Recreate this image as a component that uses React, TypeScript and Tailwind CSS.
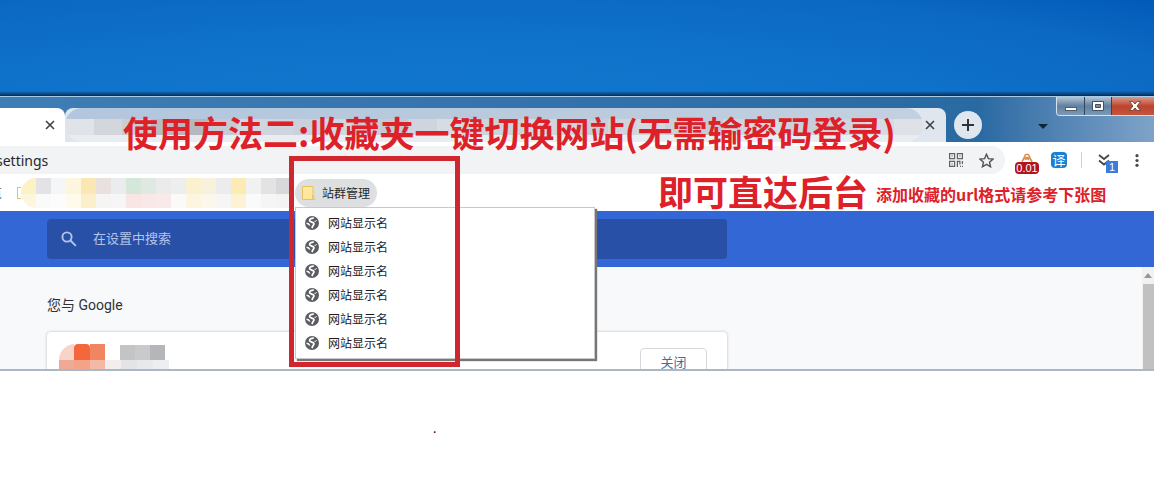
import React from 'react';

const TAB_BLUR = [
  'bg-[#e0e4e9]', 'bg-[#d3d6db]', 'bg-[#cccdd2]', 'bg-[#b9bbc2]', 'bg-[#b5b8c0]', 'bg-[#c6cad2]',
  'bg-[#d2d7de]', 'bg-[#cfd5de]', 'bg-[#cad1dc]', 'bg-[#d2d8e0]', 'bg-[#c8cfda]', 'bg-[#c3cbd7]',
  'bg-[#ced5de]', 'bg-[#d7dce3]', 'bg-[#cdd4dd]', 'bg-[#cbd3dd]', 'bg-[#d4dae2]', 'bg-[#d1d7df]',
  'bg-[#c7cfda]', 'bg-[#ced5de]', 'bg-[#d3d9e1]', 'bg-[#cad1db]', 'bg-[#c4cbd6]', 'bg-[#cfd5de]',
  'bg-[#d5dbe2]', 'bg-[#cbd2db]', 'bg-[#c8cfd8]', 'bg-[#ced5dd]', 'bg-[#d6dbe1]', 'bg-[#dee2e6]',
];

const BOOKMARK_BLUR = [
  ['bg-[#fdf1c6]', 'bg-[#fdf6de]'],
  ['bg-[#e3e3e6]', 'bg-[#fafafb]'],
  ['bg-[#f5f6f7]', 'bg-[#fcfcfc]'],
  ['bg-[#fdf6df]', 'bg-[#fefaec]'],
  ['bg-[#fbe7b3]', 'bg-[#fcf0cc]'],
  ['bg-[#e8e1df]', 'bg-[#f7f5f4]'],
  ['bg-[#ebeced]', 'bg-[#f6f6f6]'],
  ['bg-[#d3e8d9]', 'bg-[#fae5e5]'],
  ['bg-[#dfe9e2]', 'bg-[#fae7e7]'],
  ['bg-[#ebebec]', 'bg-[#fae9e9]'],
  ['bg-[#edeeef]', 'bg-[#fafafa]'],
  ['bg-[#fbf1cf]', 'bg-[#fcf6e0]'],
  ['bg-[#f8f1dc]', 'bg-[#fbf7ea]'],
  ['bg-[#ececed]', 'bg-[#f6f6f6]'],
  ['bg-[#fcebb5]', 'bg-[#fdf3d2]'],
  ['bg-[#f1f1f2]', 'bg-[#fafafa]'],
  ['bg-[#e3e3e4]', 'bg-[#f5f5f5]'],
  ['bg-[#d8d8da]', 'bg-[#f3f3f3]'],
];

const SITES = [1, 2, 3, 4, 5, 6];

const CloseIcon = () => (
  <svg className="size-[10px]" viewBox="0 0 10 10" stroke="#3c4043" strokeWidth="1.6" fill="none">
    <path d="M1 1l8 8M9 1l-8 8" />
  </svg>
);

const FolderIcon = () => (
  <svg className="size-[14px] shrink-0" viewBox="0 0 14 14">
    <path d="M.5 .5h10.500v9l1.500 4h-12z" fill="#ffe79c" stroke="#e6c261" />
    <path d="M11 9l-1 4.500" stroke="#e6c261" fill="none" />
  </svg>
);

const GlobeIcon = () => (
  <svg className="size-[14px] shrink-0" viewBox="0 0 14 14" fill="none" stroke="#fff">
    <circle cx="7" cy="7" r="7" fill="#5a5d61" stroke="none" />
    <path d="M8.800 2.200C6.500 2 4.200 3.200 4.600 4.800 5 6.300 8.200 5.800 8.900 7.300 9.500 8.700 8.500 9 8 9.600 7.500 10.300 7.500 11 6.800 12" strokeWidth="1.700" />
    <path d="M1.500 7.200c1.700.2 2.700 1 3.300 2.300" strokeWidth="1.500" />
    <path d="M9.500 5.500c1 0 1.800-.5 2.200-1.200" strokeWidth="1" />
  </svg>
);

const WindowControls = () => (
  <div className="flex h-[19px] shrink-0 overflow-hidden rounded-bl border border-t-0 border-r-0 border-[#d5e1ec] text-white">
    <button aria-label="最小化" className="flex w-[28px] items-end justify-center border-r border-[#30475f] bg-linear-to-b from-[#b5c6d6] via-[#60809f] to-[#7c9ab5] pb-1">
      <span className="h-[4px] w-[12px] border border-[#4d5b6b] bg-white" />
    </button>
    <button aria-label="最大化" className="flex w-[27px] items-center justify-center border-r border-[#30475f] bg-linear-to-b from-[#b5c6d6] via-[#60809f] to-[#7c9ab5]">
      <svg className="h-[10px] w-[12px]" viewBox="0 0 12 10" fill="none">
        <path d="M.5.5h11v9H.5z" fill="#fff" stroke="#414f60" />
        <path d="M3.500 3.500h5v3h-5z" fill="#7890a8" stroke="#414f60" />
      </svg>
    </button>
    <button aria-label="关闭窗口" className="flex w-[42px] items-center justify-center bg-linear-to-b from-[#d69a8b] via-[#bd4330] to-[#c5553c] pl-1">
      <svg className="h-[10px] w-[12px]" viewBox="0 0 12 10">
        <path d="M.5.5h3.300L6 3 8.200.5h3.300L8 5l3.500 4.500H8.200L6 7 3.800 9.500H.5L4 5z" fill="#fff" stroke="#64372f" strokeWidth=".8" />
      </svg>
    </button>
  </div>
);

const TabStrip = () => (
  <div className="flex h-[46px] items-start border-t border-[#a9cbe6] bg-linear-to-r from-[#3f7db5] via-[#2a6aa3] via-85% to-[#7fa3c8]">
    <div className="flex min-w-0 flex-1 items-end self-end">
      <div className="flex h-[34px] w-[65px] shrink-0 items-center justify-end rounded-tr-lg bg-white pr-[10px]">
        <button aria-label="关闭标签页"><CloseIcon /></button>
      </div>
      <div className="flex h-[34px] max-w-[881px] min-w-0 flex-1 items-center rounded-t-lg bg-[#dfe6ee]">
        <div className="flex h-[34px] min-w-0 flex-1 flex-col overflow-hidden rounded-full bg-[#e9ecf0]">
          <div className="h-[11px] bg-linear-to-r from-[#b3c6de] via-[#b9cadc] to-[#c3d0df]" />
          <div className="flex h-[16px]">
            {TAB_BLUR.map((tone, i) => (
              <span key={i} className={`flex-1 ${tone}`} />
            ))}
          </div>
        </div>
        <button aria-label="关闭标签页" className="px-[11px] pl-0.5"><CloseIcon /></button>
      </div>
      <button aria-label="新标签页" className="mb-[3px] ml-2 flex size-[28px] shrink-0 items-center justify-center rounded-full bg-[#dfe6ee]">
        <svg className="size-[12px]" viewBox="0 0 12 12" stroke="#2f3337" strokeWidth="2">
          <path d="M6 0v12M0 6h12" />
        </svg>
      </button>
      <svg className="mb-[13px] ml-[56px] h-[5px] w-[10px] shrink-0" viewBox="0 0 10 5">
        <path d="M0 0h10L5 5z" fill="#10243a" />
      </svg>
    </div>
    <WindowControls />
  </div>
);

const Toolbar = () => (
  <div className="flex h-[32px] items-end">
    <div className="flex h-[28px] min-w-0 flex-1 items-center rounded-r-full bg-[#f1f3f4] pr-[11px]">
      <input
        aria-label="地址"
        defaultValue="settings"
        className="-ml-1 min-w-0 flex-1 bg-transparent font-['Noto_Sans','Open_Sans',sans-serif] text-[14px] text-[#25282b] outline-none"
      />
      <button aria-label="二维码">
        <svg className="size-[14px]" viewBox="0 0 14 14" fill="none" stroke="#5f6368" strokeWidth="1.200">
          <path d="M.6.6h5v5h-5zM8.400.6h5v5h-5zM.6 8.400h5v5h-5z" />
          <path d="M2.500 3h1.200M10.300 3h1.200M2.500 11h1.200M8.400 14V8.400h2.500v3M13.400 8v3M11 13.400h1M13 13.400h1" />
        </svg>
      </button>
      <button aria-label="收藏" className="ml-4">
        <svg className="size-[15px]" viewBox="0 0 24 24" fill="none" stroke="#4f5357" strokeWidth="2.200">
          <path d="M12 2l3 7 7.500.700-5.700 5 1.700 7.300-6.500-3.900L5.500 22l1.700-7.300-5.700-5L9 9z" />
        </svg>
      </button>
    </div>
    <div className="flex h-[28px] shrink-0 items-center pl-[10px]">
      <button aria-label="扩展程序" className="flex h-[28px] w-[24px] flex-col items-center justify-end">
        <svg className="h-[9px] w-[12px]" viewBox="0 0 14 10" fill="none" stroke="#d98a4a" strokeWidth="1.800">
          <path d="M1 10C2.500 8 4 6 4.300 3.500 5 .500 9 .500 9.700 3.500 10 6 11.500 8 13 10M4 5.500h6M5 8l2-3 2 3" />
        </svg>
        <span className="rounded-sm bg-[#b3131c] px-px font-['Liberation_Sans',sans-serif] text-[11px] leading-[12px] text-white">0.01</span>
      </button>
      <button aria-label="翻译" className="ml-3 flex size-[16px] items-center justify-center rounded-sm bg-[#1b7fd4] text-[13px] leading-4 text-white">译</button>
      <span className="ml-[14px] h-4 w-px bg-[#cfd1d4]" />
      <button aria-label="更多扩展" className="relative ml-4 size-[14px]">
        <svg className="size-[12px]" viewBox="0 0 12 12" fill="none" stroke="#45494d" strokeWidth="1.800">
          <path d="M1 1l5 4 5-4M1 6.500l5 4 5-4" />
        </svg>
        <span className="absolute top-2 left-2 flex size-[12px] items-center justify-center bg-[#3b7bdc] font-['Liberation_Sans',sans-serif] text-[11px] text-white">1</span>
      </button>
      <button aria-label="菜单" className="mr-[15px] ml-[23px]">
        <svg className="h-[13px] w-[4px]" viewBox="0 0 4 13" fill="#45494d">
          <circle cx="2" cy="1.700" r="1.600" />
          <circle cx="2" cy="6.500" r="1.600" />
          <circle cx="2" cy="11.300" r="1.600" />
        </svg>
      </button>
    </div>
  </div>
);

const SiteMenu = () => (
  <ul className="absolute top-full left-0 z-10 w-[300px] border border-[#c8c8c8] bg-white pt-[3px] pb-[3px] shadow-[2px_2px_1px_#777]">
    {SITES.map((site) => (
      <li key={site}>
        <button className="flex h-6 w-full items-center gap-[9px] pl-[9px] text-[12px] text-[#1c1c1c]">
          <GlobeIcon />
          网站显示名
        </button>
      </li>
    ))}
  </ul>
);

const BookmarksBar = () => (
  <div className="flex h-[37px] items-center bg-white">
    <div className="flex w-[295px] shrink-0 items-center">
      <span className="flex w-[2px] justify-end overflow-hidden text-[12px] text-[#555]">览</span>
      <span className="ml-[15px] h-[12px] w-[4px] border border-r-0 border-[#dcc46e]" />
      <div className="flex overflow-hidden rounded-l-full">
        {BOOKMARK_BLUR.map(([top, bottom], i) => (
          <span key={i} className="flex w-[15px] flex-col">
            <span className={`h-[16px] ${top}`} />
            <span className={`h-[14px] ${bottom}`} />
          </span>
        ))}
      </div>
    </div>
    <div className="relative">
      <button className="flex h-[28px] items-center gap-1.5 rounded-full bg-[#dedfe1] px-[7px] text-[12px] text-[#26292c]">
        <FolderIcon />
        站群管理
      </button>
      <SiteMenu />
    </div>
  </div>
);

const SearchHeader = () => (
  <div className="h-[56px] bg-[#3367d6] pt-2 pl-[47px]">
    <label className="flex h-10 w-full max-w-[680px] items-center rounded-sm bg-[#2850a7] pl-[14px]">
      <svg className="size-[16px]" viewBox="0 0 16 16" fill="none" stroke="#b4c4e6" strokeWidth="1.900">
        <circle cx="6" cy="6" r="4.600" />
        <path d="M9.500 9.500l5.300 5.300" />
      </svg>
      <input
        aria-label="在设置中搜索"
        placeholder="在设置中搜索"
        className="ml-4 min-w-0 flex-1 bg-transparent pb-0.5 text-[13px] outline-none placeholder:text-[#b4c5ea]"
      />
    </label>
  </div>
);

const SettingsPage = () => (
  <div className="flex h-[104px] overflow-hidden border-b-2 border-[#a9b8c4] bg-[#f8f9fb]">
    <div className="min-w-0 flex-1 pt-7 pl-[47px]">
      <h2 className="font-['Roboto','Noto_Sans_CJK_SC',sans-serif] text-[14px] leading-5 text-[#303336]">您与 Google</h2>
      <div className="mt-[17px] flex h-[60px] w-full max-w-[680px] items-start justify-between rounded bg-white pr-5 pl-3 shadow-[0_0_3px_#b6babf]">
        <div className="mt-3 flex">
          <div className="grid w-[46px] grid-cols-3 overflow-hidden rounded-tl-2xl">
            <span className="h-[16px] bg-[#f8d3c8]" />
            <span className="h-[16px] rounded-t bg-[#f4673a]" />
            <span className="h-[16px] bg-[#f18461]" />
            <span className="h-[12px] bg-[#efa995]" />
            <span className="h-[12px] bg-[#f3a387]" />
            <span className="h-[12px] bg-[#f4b9a5]" />
          </div>
          <div className="mt-px w-[64px]">
            <div className="flex h-[15px] pl-[15px]">
              <span className="w-[15px] bg-[#c3c4c6]" />
              <span className="w-[15px] bg-[#c9cacc]" />
              <span className="w-[15px] bg-[#b5b6b9]" />
            </div>
            <div className="flex h-[12px]">
              <span className="flex-1 bg-[#f3eeed]" />
              <span className="flex-1 bg-[#e3e4e5]" />
              <span className="flex-1 bg-[#e8e9ea]" />
              <span className="flex-1 bg-[#edeeef]" />
            </div>
          </div>
        </div>
        <button className="mt-4 h-[30px] w-[67px] rounded border border-[#d5d8dc] pb-0.5 text-[13px] leading-4 text-[#3d709f]">关闭</button>
      </div>
    </div>
    <div className="w-[12px] shrink-0 bg-[#f1f1f1]">
      <svg className="mx-auto mt-[6px] h-[5px] w-[8px]" viewBox="0 0 8 5">
        <path d="M0 5l4-5 4 5z" fill="#969696" />
      </svg>
      <div className="mt-[6px] ml-px h-full bg-[#c1c1c1]" />
    </div>
  </div>
);

const Annotations = () => (
  <div className="pointer-events-none absolute inset-0 z-20 font-bold text-[#de2129]">
    <p className="absolute top-[107px] left-[123px] text-[35px] leading-[50px] whitespace-nowrap">
      使用方法二:收藏夹一键切换网站(无需输密码登录)
    </p>
    <p className="absolute top-[166px] left-[658px] text-[35px] leading-[50px] whitespace-nowrap">即可直达后台</p>
    <p className="absolute top-[182px] left-[876px] text-[16px] leading-6 whitespace-nowrap">
      添加收藏的url格式请参考下张图
    </p>
    <div className="absolute top-[156px] left-[289px] h-[211px] w-[171px] border-5 border-[#d0262e]" />
    <span className="absolute top-[420px] left-[433px] text-[12px] leading-4 font-normal text-black">.</span>
  </div>
);

export default function App() {
  return (
    <div className="relative min-h-screen overflow-hidden bg-white font-['Noto_Sans_CJK_SC',sans-serif]">
      <div className="flex h-[96px] flex-col justify-end bg-[radial-gradient(ellipse_at_38%_130%,#1279cf_0%,#0f72ca_50%,#0b68c3_80%,#025ab8_100%)]">
        <div className="h-[5px] bg-linear-to-b from-transparent to-[#0a2b4d]" />
      </div>
      <TabStrip />
      <Toolbar />
      <BookmarksBar />
      <SearchHeader />
      <SettingsPage />
      <Annotations />
    </div>
  );
}
